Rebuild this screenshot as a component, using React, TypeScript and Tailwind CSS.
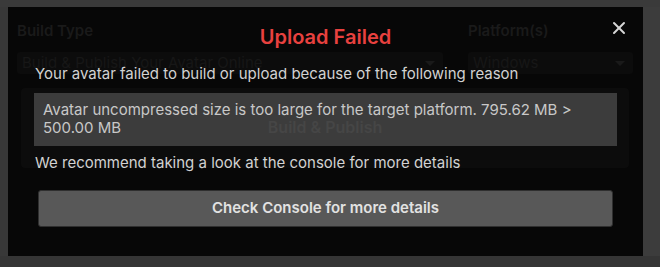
import { X } from "lucide-react";

function Dropdown({ label, className }: { label: string; className: string }) {
  return (
    <div className={`h-[22px] rounded-[3px] bg-[#0c0c0c] flex items-center justify-between pl-[5px] pr-[8px] ${className}`}>
      <span className="text-[15px] leading-[18px] text-[#171717]">{label}</span>
      <span className="w-0 h-0 border-l-[5px] border-r-[5px] border-t-[5px] border-l-transparent border-r-transparent border-t-[#1a1a1a]" />
    </div>
  );
}

export default function App() {
  return (
    <div className="w-[660px] h-[267px] flex flex-col bg-[#353535] overflow-hidden" style={{ fontFamily: "Inter, 'Noto Sans', sans-serif" }}>
      <div className="h-[7px] bg-[#3a3a3a]" />
      <div className="flex h-[249px]">
        <div className="w-[8px] bg-[#383838]" />

        {/* Dimmed window behind the dialog */}
        <div className="relative w-[635px] h-[249px] bg-[#070707]">
          <div className="pt-[15px] pl-[9px] pr-[10px]">
            <div className="flex gap-[25px]">
              <div className="w-[426px]">
                <div className="text-[15px] leading-[18px] font-semibold text-[#1a1a1a]">Build Type</div>
                <Dropdown label="Build & Publish Your Avatar Online" className="mt-[12px]" />
              </div>
              <div className="w-[165px]">
                <div className="text-[15px] leading-[18px] font-semibold text-[#1a1a1a]">Platform(s)</div>
                <Dropdown label="Windows" className="mt-[12px]" />
              </div>
            </div>
            <div className="mt-[14px] ml-[4px] w-[608px] h-[80px] rounded-[4px] bg-[#0c0c0c] flex items-center justify-center">
              <span className="text-[16px] font-semibold text-[#181818] -mt-[2px]">Build &amp; Publish</span>
            </div>
          </div>

          {/* Upload Failed dialog */}
          <div className="absolute inset-0 flex flex-col px-[26px]">
            <button className="absolute left-[601px] top-[11px] w-[20px] h-[20px] flex items-center justify-center text-[#d6d6d6]">
              <X size={20} strokeWidth={2.4} />
            </button>
            <h1 className="mt-[18px] text-center text-[20px] leading-[24px] font-semibold text-[#e8413f]">
              Upload Failed
            </h1>
            <p className="mt-[16px] pl-[1px] text-[15px] leading-[18px] text-[#d2d2d2]">
              Your avatar failed to build or upload because of the following reason
            </p>
            <div className="mt-[10px] h-[53px] bg-[rgba(255,255,255,0.2)] pl-[9px] pr-[6px] pt-[8px] text-[15px] leading-[18px] text-[#c8c8c8]">
              Avatar uncompressed size is too large for the target platform. 795.62 MB &gt; 500.00 MB
            </div>
            <p className="mt-[8px] pl-[1px] text-[15px] leading-[18px] text-[#d2d2d2]">
              We recommend taking a look at the console for more details
            </p>
            <button className="mt-[18px] mx-[4px] h-[37px] rounded-[3px] bg-[#585858] border border-[#2f2f2f] text-[15px] font-semibold text-[#e2e2e2]">
              Check Console for more details
            </button>
          </div>
        </div>

        <div className="flex-1 bg-[#3c3c3c]" />
      </div>
      <div className="flex-1 bg-[#353535]" />
    </div>
  );
}
